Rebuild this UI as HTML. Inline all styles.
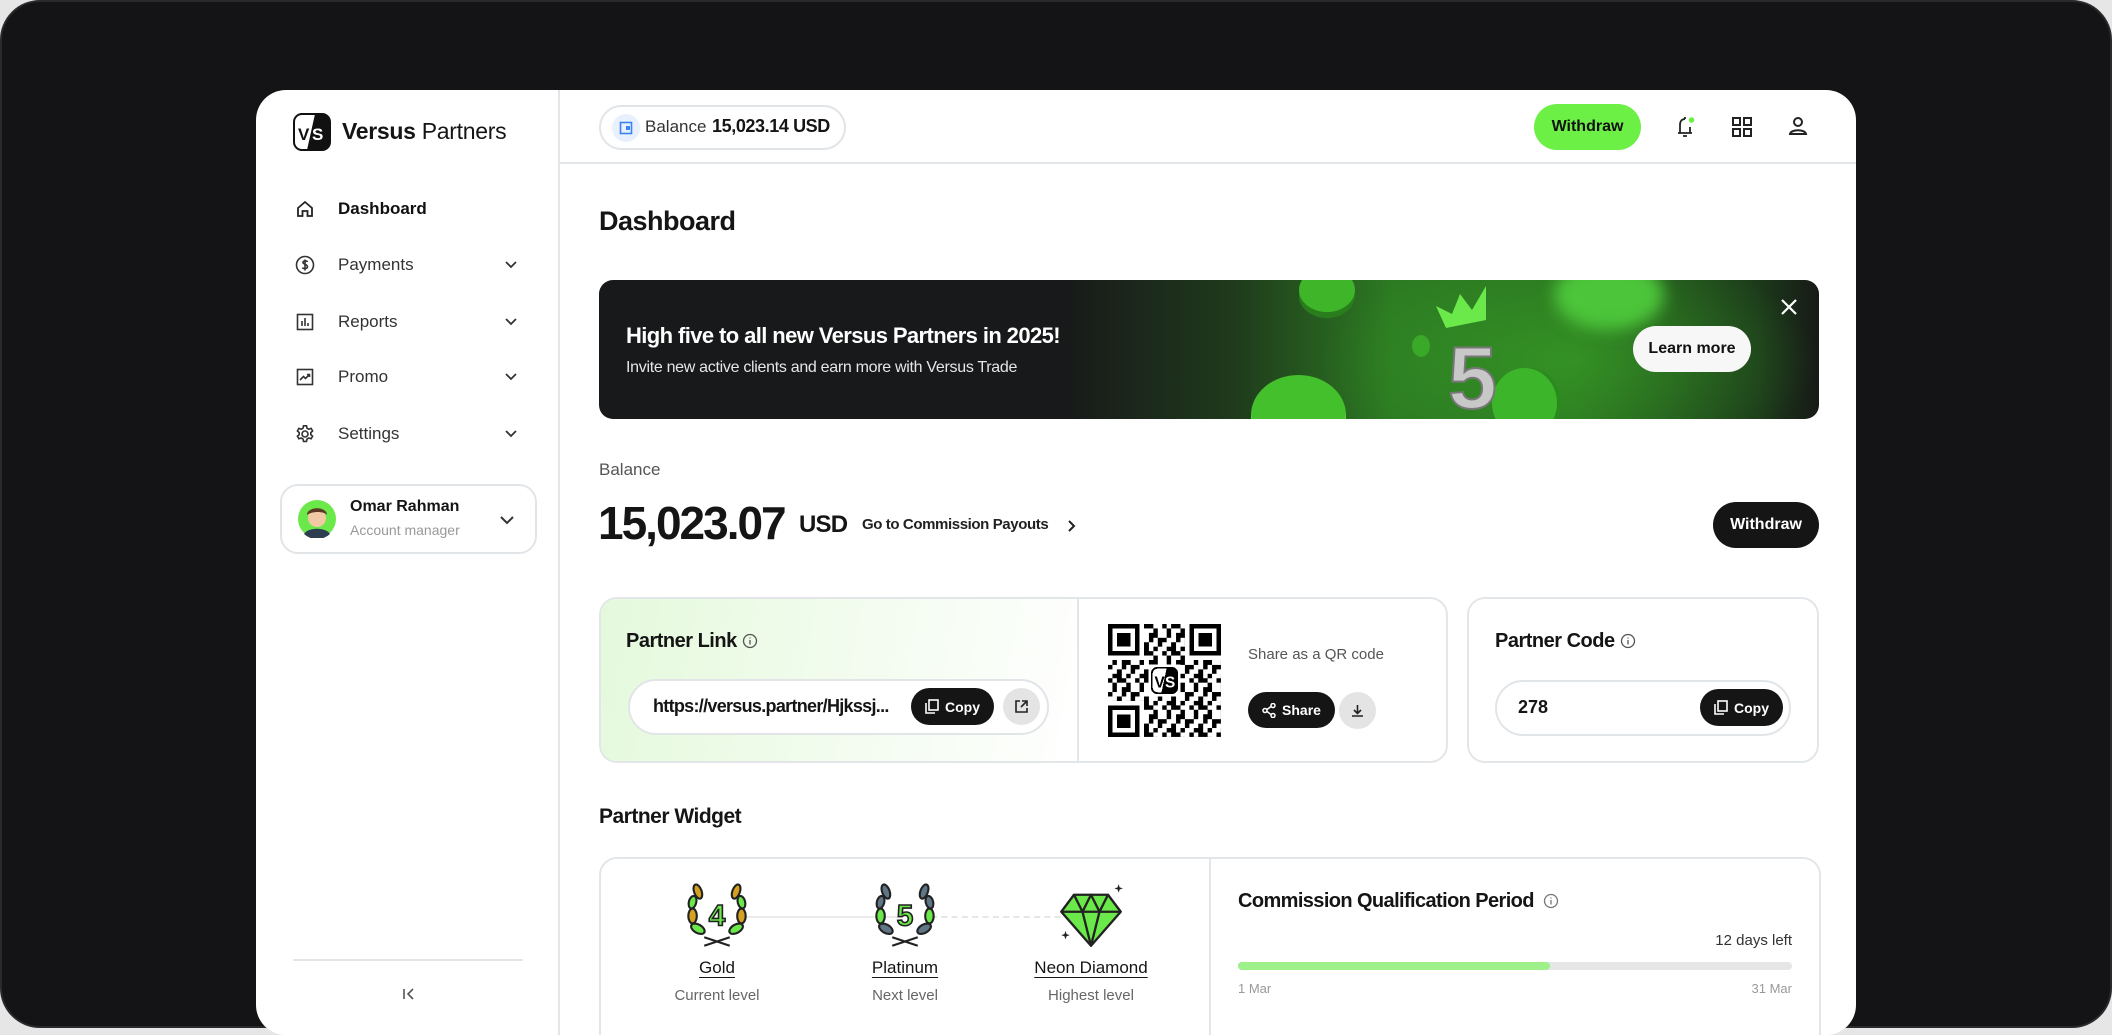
<!DOCTYPE html>
<html><head><meta charset="utf-8">
<style>
*{box-sizing:border-box;margin:0;padding:0}
body{width:2112px;height:1028px;overflow:hidden;background:#e6e6e6;font-family:"Liberation Sans",sans-serif;color:#151515;position:relative}
.bg{position:absolute;left:0;top:0;width:2112px;height:1028px;background:#141416;border-radius:40px;border:2px solid #2a2a2c}
.card{position:absolute;left:256px;top:90px;width:1600px;height:945px;background:#fff;border-radius:30px;overflow:hidden}
.abs{position:absolute}
.side{position:absolute;left:0;top:0;width:304px;height:945px;border-right:2px solid #e3e6e8}
.nav{position:absolute;left:55px;font-size:17px;color:#333}
.nav svg{position:absolute;left:-16px;top:-10px}
.nav span{position:absolute;left:27px;white-space:nowrap;top:-10px}
.chev{position:absolute;left:248px}
.top{position:absolute;left:304px;top:0;right:0;height:74px;border-bottom:2px solid #e3e6e8}
.pill{border:2px solid #e2e5e8;border-radius:30px}
.btn{position:absolute;display:flex;align-items:center;justify-content:center;border-radius:30px;font-weight:bold}
.dark{background:#151515;color:#fff}
.t{position:absolute;white-space:nowrap}
.box{position:absolute;border:2px solid #e3e6e8;border-radius:18px;overflow:hidden}
.lbl{position:absolute;width:180px;text-align:center;font-size:17px;text-decoration:underline;text-underline-offset:4px}
.sub{position:absolute;width:180px;text-align:center;font-size:15px;color:#666}
</style></head><body>
<div class="bg"></div>
<div class="card">
 <div class="side">
  <svg class="abs" style="left:37px;top:23px" width="38" height="38" viewBox="0 0 38 38"><rect x="1" y="1" width="36" height="36" rx="8" fill="#fff" stroke="#111" stroke-width="2"/><path d="M22 1 H29 A8 8 0 0 1 37 9 V29 A8 8 0 0 1 29 37 H14 Z" fill="#111"/><text x="5" y="27" font-family="Liberation Sans" font-weight="bold" font-size="17" fill="#111">V</text><text x="19" y="27" font-family="Liberation Sans" font-weight="bold" font-size="17" fill="#fff">S</text></svg>
  <div class="t" style="left:86px;top:28px;font-size:23px;letter-spacing:-0.3px"><b>Versus</b> Partners</div>
  <div class="nav" style="top:119px"><svg width="20" height="20" viewBox="0 0 20 20" fill="none" stroke="#222" stroke-width="1.8"><path d="M3 9 L10 3 L17 9 V17 H12.5 V12 H7.5 V17 H3 Z"/></svg><span style="font-weight:bold;color:#111">Dashboard</span></div>
  <div class="nav" style="top:175px"><svg width="20" height="20" viewBox="0 0 20 20" fill="none" stroke="#333" stroke-width="1.6"><circle cx="10" cy="10" r="8.5"/><path d="M12.5 7 C12 5.5 8 5.5 8 7.5 C8 9.5 12.5 9 12.5 11.8 C12.5 14 8 14 7.5 12.5 M10 4.5 V15.5"/></svg><span>Payments</span></div>
  <div class="nav" style="top:232px"><svg width="20" height="20" viewBox="0 0 20 20" fill="none" stroke="#333" stroke-width="1.6"><rect x="2.5" y="2.5" width="15" height="15"/><path d="M7 14V9 M10 14V6 M13 14V11"/></svg><span>Reports</span></div>
  <div class="nav" style="top:287px"><svg width="20" height="20" viewBox="0 0 20 20" fill="none" stroke="#333" stroke-width="1.6"><rect x="2.5" y="2.5" width="15" height="15"/><path d="M5 13 L8.5 9.5 L10.5 11.5 L14.5 7.5 M12 7.5H14.5V10"/></svg><span>Promo</span></div>
  <div class="nav" style="top:344px"><svg width="20" height="20" viewBox="0 0 20 20" fill="none" stroke="#333" stroke-width="1.6"><circle cx="10" cy="10" r="3"/><path d="M8.5 1.8h3l.5 2.4 1.8 1 2.3-.8 1.5 2.6-1.8 1.6v2l1.8 1.6-1.5 2.6-2.3-.8-1.8 1-.5 2.4h-3l-.5-2.4-1.8-1-2.3.8-1.5-2.6 1.8-1.6v-2L2.4 7l1.5-2.6 2.3.8 1.8-1z"/></svg><span>Settings</span></div>
  <svg class="chev" style="top:170px" width="14" height="10" viewBox="0 0 14 10" fill="none" stroke="#333" stroke-width="1.8"><path d="M2 2l5 5 5-5"/></svg>
  <svg class="chev" style="top:227px" width="14" height="10" viewBox="0 0 14 10" fill="none" stroke="#333" stroke-width="1.8"><path d="M2 2l5 5 5-5"/></svg>
  <svg class="chev" style="top:282px" width="14" height="10" viewBox="0 0 14 10" fill="none" stroke="#333" stroke-width="1.8"><path d="M2 2l5 5 5-5"/></svg>
  <svg class="chev" style="top:339px" width="14" height="10" viewBox="0 0 14 10" fill="none" stroke="#333" stroke-width="1.8"><path d="M2 2l5 5 5-5"/></svg>
  <div class="abs pill" style="left:24px;top:394px;width:257px;height:70px;border-radius:18px"></div>
  <svg class="abs" style="left:42px;top:410px" width="38" height="38" viewBox="0 0 38 38"><circle cx="19" cy="19" r="19" fill="#6be84a"/><circle cx="19" cy="18" r="9" fill="#f1c9a5"/><path d="M9 15 C9 6 29 6 29 15 C26 11 14 11 9 15Z" fill="#5a3a22"/><path d="M6 34 C10 27 28 27 32 34 A19 19 0 0 1 6 34Z" fill="#2c3e50"/></svg>
  <div class="t" style="left:94px;top:408px;font-size:16px;font-weight:bold">Omar Rahman</div>
  <div class="t" style="left:94px;top:432px;font-size:14px;color:#999">Account manager</div>
  <svg class="abs" style="left:243px;top:425px" width="16" height="10" viewBox="0 0 16 10" fill="none" stroke="#333" stroke-width="2"><path d="M2 2l6 6 6-6"/></svg>
  <div class="abs" style="left:37px;top:869px;width:230px;height:2px;background:#e3e6e8"></div>
  <svg class="abs" style="left:146px;top:897px" width="14" height="14" viewBox="0 0 14 14" fill="none" stroke="#555" stroke-width="1.6"><path d="M2 2V12 M11 2L6 7L11 12"/></svg>
 </div>
 <div class="top">
  <div class="abs pill" style="left:39px;top:15px;width:247px;height:45px"></div>
  <div class="abs" style="left:52px;top:24px;width:28px;height:28px;border-radius:50%;background:#e8f0fd"></div>
  <svg class="abs" style="left:59px;top:31px" width="14" height="14" viewBox="0 0 14 14"><rect x="1.5" y="1.5" width="11" height="11" fill="none" stroke="#3b82f6" stroke-width="1.6"/><rect x="7" y="5" width="4" height="4" fill="#3b82f6"/></svg>
  <div class="t" style="left:85px;top:27px;font-size:17px;color:#333">Balance</div>
  <div class="t" style="left:152px;top:26px;font-size:18px;font-weight:bold;letter-spacing:-0.4px">15,023.14 USD</div>
  <div class="btn" style="left:974px;top:14px;width:107px;height:46px;background:#6cf046;color:#111;font-size:16px">Withdraw</div>
  <svg class="abs" style="left:1112px;top:24px" width="26" height="26" viewBox="0 0 26 26" fill="none" stroke="#222" stroke-width="1.8"><path d="M6 19 H20 M8 19 V11 C8 7 10 5 13 5 M18 13 V19 M11 22 H15 M13 3V5"/><circle cx="19.5" cy="6" r="2.8" fill="#6cf046" stroke="none"/></svg>
  <svg class="abs" style="left:1171px;top:26px" width="22" height="22" viewBox="0 0 22 22" fill="none" stroke="#222" stroke-width="2"><rect x="2" y="2" width="7" height="7"/><rect x="13" y="2" width="7" height="7"/><rect x="2" y="13" width="7" height="7"/><rect x="13" y="13" width="7" height="7"/></svg>
  <svg class="abs" style="left:1227px;top:25px" width="22" height="22" viewBox="0 0 22 22" fill="none" stroke="#222" stroke-width="2"><circle cx="11" cy="7" r="4"/><path d="M3 19 C4 14 18 14 19 19 Z"/></svg>
 </div>
 <div class="t" style="left:343px;top:116px;font-size:27px;font-weight:bold;letter-spacing:-0.5px">Dashboard</div>
 <!-- banner -->
 <div class="abs" style="left:343px;top:190px;width:1220px;height:139px;border-radius:14px;overflow:hidden;background:linear-gradient(90deg,#18191a 0%,#18191a 38%,#1f3a1c 52%,#2c7a22 65%,#2a7320 80%,#1c3a1a 95%,#171a17 100%)">
  <div class="abs" style="left:720px;top:-40px;width:500px;height:240px;background:radial-gradient(ellipse at center,rgba(60,170,40,.55),rgba(0,0,0,0) 70%)"></div>
  <div class="abs" style="left:700px;top:-12px;width:56px;height:44px;border-radius:50%;background:#3fb52a;box-shadow:0 6px 0 #2a7d1c"></div>
  <div class="abs" style="left:652px;top:95px;width:95px;height:80px;border-radius:50%;background:#44c02c;box-shadow:0 -4px 0 #6de24e inset"></div>
  <div class="abs" style="left:813px;top:55px;width:18px;height:22px;border-radius:50%;background:#3aa828"></div>
  <div class="abs" style="left:893px;top:88px;width:65px;height:70px;border-radius:50%;background:#3db52a;box-shadow:4px 0 0 #2a8a1d"></div>
  <div class="abs" style="left:955px;top:-20px;width:110px;height:70px;border-radius:50%;background:#4cc53a;filter:blur(8px)"></div>
  <svg class="abs" style="left:835px;top:4px" width="80" height="130" viewBox="0 0 80 130"><path d="M2 22 L18 30 L26 10 L38 26 L52 2 L52 36 L12 44Z" fill="#6be84a"/><text x="14" y="124" font-family="Liberation Sans" font-weight="bold" font-size="88" fill="#c8c8c8" stroke="#777" stroke-width="2">5</text></svg>
  <div class="t" style="left:27px;top:43px;font-size:22px;font-weight:bold;color:#fff;letter-spacing:-0.6px">High five to all new Versus Partners in 2025!</div>
  <div class="t" style="left:27px;top:79px;font-size:16px;color:#e6e6e6;letter-spacing:-0.3px">Invite new active clients and earn more with Versus Trade</div>
  <div class="btn" style="left:1034px;top:46px;width:118px;height:46px;background:#f7f7f8;color:#111;font-size:16px">Learn more</div>
  <svg class="abs" style="left:1181px;top:18px" width="18" height="18" viewBox="0 0 18 18" stroke="#fff" stroke-width="2.2"><path d="M2 2L16 16M16 2L2 16"/></svg>
 </div>
 <div class="t" style="left:343px;top:370px;font-size:17px;color:#555">Balance</div>
 <div class="t" style="left:342px;top:406px;font-size:46px;font-weight:bold;letter-spacing:-2px">15,023.07</div>
 <div class="t" style="left:543px;top:421px;font-size:24px;font-weight:bold;letter-spacing:-0.8px">USD</div>
 <div class="t" style="left:606px;top:426px;font-size:15px;font-weight:bold;color:#222;letter-spacing:-0.4px">Go to Commission Payouts</div>
 <svg class="abs" style="left:810px;top:429px" width="10" height="14" viewBox="0 0 10 14" fill="none" stroke="#222" stroke-width="2"><path d="M3 2l5 5-5 5"/></svg>
 <div class="btn dark" style="left:1457px;top:412px;width:106px;height:46px;font-size:16px">Withdraw</div>

 <!-- partner link card -->
 <div class="box" style="left:343px;top:507px;width:849px;height:166px">
  <div class="abs" style="left:0;top:0;width:478px;height:166px;background:linear-gradient(100deg,#e4f9dc 0%,#f2fcee 50%,#fff 100%);border-right:2px solid #e3e6e8"></div>
  <div class="t" style="left:25px;top:31px;font-size:20px;font-weight:bold;letter-spacing:-0.5px">Partner Link</div>
  <svg class="abs" style="left:141px;top:34px" width="16" height="16" viewBox="0 0 16 16" fill="none" stroke="#555" stroke-width="1.3"><circle cx="8" cy="8" r="6.5"/><path d="M8 7V11.5M8 4.5V5.5"/></svg>
  <div class="abs pill" style="left:27px;top:80px;width:421px;height:56px;background:#fff"></div>
  <div class="t" style="left:52px;top:97px;font-size:18px;font-weight:bold;letter-spacing:-0.7px">https://versus.partner/Hjkssj...</div>
  <div class="btn dark" style="left:310px;top:89px;width:83px;height:37px;font-size:14px"><svg width="14" height="15" viewBox="0 0 14 15" fill="none" stroke="#fff" stroke-width="1.6" style="margin-right:6px"><rect x="4" y="1" width="9" height="10"/><path d="M1 4V14H10"/></svg>Copy</div>
  <div class="abs" style="left:402px;top:89px;width:37px;height:37px;border-radius:50%;background:#e4e4e4"></div>
  <svg class="abs" style="left:413px;top:100px" width="15" height="15" viewBox="0 0 15 15" fill="none" stroke="#222" stroke-width="1.6"><path d="M6 2H2V13H13V9M8 2H13V7M13 2L7 8"/></svg>
  <svg class="abs" style="left:507px;top:25px" width="113" height="113" viewBox="0 0 25 25" shape-rendering="crispEdges">
   <defs><pattern id="q" width="6" height="6" patternUnits="userSpaceOnUse"><rect x="0" y="0" width="1" height="1"/><rect x="2" y="0" width="2" height="1"/><rect x="1" y="1" width="1" height="2"/><rect x="4" y="1" width="1" height="1"/><rect x="3" y="2" width="2" height="1"/><rect x="0" y="3" width="1" height="1"/><rect x="5" y="3" width="1" height="2"/><rect x="2" y="4" width="1" height="1"/><rect x="1" y="5" width="2" height="1"/><rect x="4" y="5" width="1" height="1"/><rect x="3" y="3" width="1" height="1"/></pattern></defs>
   <rect x="0" y="0" width="25" height="25" fill="url(#q)"/>
   <rect x="0" y="0" width="8" height="8" fill="#fff"/><rect x="17" y="0" width="8" height="8" fill="#fff"/><rect x="0" y="17" width="8" height="8" fill="#fff"/>
   <rect x="0.5" y="0.5" width="6" height="6" fill="none" stroke="#000"/><rect x="2" y="2" width="3" height="3"/>
   <rect x="18.5" y="0.5" width="6" height="6" fill="none" stroke="#000"/><rect x="20" y="2" width="3" height="3"/>
   <rect x="0.5" y="18.5" width="6" height="6" fill="none" stroke="#000"/><rect x="2" y="20" width="3" height="3"/>
   <rect x="9" y="9" width="7" height="7" fill="#fff"/>
   <rect x="9.7" y="9.7" width="5.6" height="5.6" rx="1.2" fill="#fff" stroke="#000" stroke-width="0.4"/>
   <path d="M13 9.7H14.1A1.2 1.2 0 0 1 15.3 10.9V14.1A1.2 1.2 0 0 1 14.1 15.3H11.8Z"/>
   <text x="10.3" y="14" font-family="Liberation Sans" font-weight="bold" font-size="3.4" fill="#000">V</text><text x="12.6" y="14" font-family="Liberation Sans" font-weight="bold" font-size="3.4" fill="#fff">S</text>
  </svg>
  <div class="t" style="left:647px;top:47px;font-size:15px;color:#555">Share as a QR code</div>
  <div class="btn dark" style="left:647px;top:93px;width:87px;height:36px;font-size:14px"><svg width="14" height="15" viewBox="0 0 14 15" fill="none" stroke="#fff" stroke-width="1.5" style="margin-right:6px"><circle cx="3" cy="7.5" r="2"/><circle cx="11" cy="2.5" r="2"/><circle cx="11" cy="12.5" r="2"/><path d="M5 6.5L9 3.5M5 8.5L9 11.5"/></svg>Share</div>
  <div class="abs" style="left:738px;top:93px;width:37px;height:37px;border-radius:50%;background:#e4e4e4"></div>
  <svg class="abs" style="left:749px;top:104px" width="15" height="15" viewBox="0 0 15 15" fill="none" stroke="#222" stroke-width="1.6"><path d="M7.5 2V10M4 7L7.5 10.5L11 7M2 13H13"/></svg>
 </div>
 <!-- partner code -->
 <div class="box" style="left:1211px;top:507px;width:352px;height:166px">
  <div class="t" style="left:26px;top:31px;font-size:20px;font-weight:bold;letter-spacing:-0.5px">Partner Code</div>
  <svg class="abs" style="left:151px;top:34px" width="16" height="16" viewBox="0 0 16 16" fill="none" stroke="#555" stroke-width="1.3"><circle cx="8" cy="8" r="6.5"/><path d="M8 7V11.5M8 4.5V5.5"/></svg>
  <div class="abs pill" style="left:26px;top:81px;width:296px;height:56px"></div>
  <div class="t" style="left:49px;top:98px;font-size:18px;font-weight:bold">278</div>
  <div class="btn dark" style="left:231px;top:90px;width:83px;height:37px;font-size:14px"><svg width="14" height="15" viewBox="0 0 14 15" fill="none" stroke="#fff" stroke-width="1.6" style="margin-right:6px"><rect x="4" y="1" width="9" height="10"/><path d="M1 4V14H10"/></svg>Copy</div>
 </div>
 <div class="t" style="left:343px;top:715px;font-size:21px;font-weight:bold;letter-spacing:-0.5px">Partner Widget</div>
 <!-- widget -->
 <div class="box" style="left:343px;top:767px;width:1222px;height:200px">
  <div class="abs" style="left:608px;top:0;width:2px;height:200px;background:#e3e6e8"></div>
  <div class="abs" style="left:140px;top:57px;width:160px;height:2px;background:#ececec"></div>
  <div class="abs" style="left:330px;top:57px;width:140px;height:0;border-top:2px dashed #e6e6e6"></div>
  <svg class="abs" style="left:82px;top:23px" width="68" height="68" viewBox="0 0 64 64" stroke="#222" stroke-width="2">
   <g fill="#6be84a"><ellipse cx="14" cy="44" rx="7" ry="4" transform="rotate(30 14 44)"/><ellipse cx="50" cy="44" rx="7" ry="4" transform="rotate(-30 50 44)"/></g>
   <g fill="#d4a21f"><ellipse cx="9" cy="32" rx="4" ry="7"/><ellipse cx="55" cy="32" rx="4" ry="7"/><ellipse cx="14" cy="9" rx="3.5" ry="7" transform="rotate(-20 14 9)"/><ellipse cx="50" cy="9" rx="3.5" ry="7" transform="rotate(20 50 9)"/></g>
   <g fill="#6be84a"><ellipse cx="9" cy="19" rx="3.5" ry="6" transform="rotate(15 9 19)"/><ellipse cx="55" cy="19" rx="3.5" ry="6" transform="rotate(-15 55 19)"/></g>
   <path d="M20 60 L44 52 M44 60 L20 52" fill="none"/>
   <text x="32" y="41" text-anchor="middle" font-family="Liberation Sans" font-weight="bold" font-size="28" fill="#6be84a" stroke="#222" stroke-width="1.5">4</text>
  </svg>
  <svg class="abs" style="left:270px;top:23px" width="68" height="68" viewBox="0 0 64 64" stroke="#222" stroke-width="2">
   <g fill="#5e7686"><ellipse cx="14" cy="44" rx="7" ry="4" transform="rotate(30 14 44)"/><ellipse cx="50" cy="44" rx="7" ry="4" transform="rotate(-30 50 44)"/><ellipse cx="14" cy="9" rx="3.5" ry="7" transform="rotate(-20 14 9)"/><ellipse cx="50" cy="9" rx="3.5" ry="7" transform="rotate(20 50 9)"/></g>
   <g fill="#6be84a"><ellipse cx="9" cy="32" rx="4" ry="7"/><ellipse cx="55" cy="32" rx="4" ry="7"/></g>
   <g fill="#5e7686"><ellipse cx="9" cy="19" rx="3.5" ry="6" transform="rotate(15 9 19)"/><ellipse cx="55" cy="19" rx="3.5" ry="6" transform="rotate(-15 55 19)"/></g>
   <path d="M20 60 L44 52 M44 60 L20 52" fill="none"/>
   <text x="32" y="41" text-anchor="middle" font-family="Liberation Sans" font-weight="bold" font-size="28" fill="#6be84a" stroke="#222" stroke-width="1.5">5</text>
  </svg>
  <svg class="abs" style="left:456px;top:23px" width="68" height="68" viewBox="0 0 64 64" stroke="#222" stroke-width="2.2" stroke-linejoin="round">
   <path d="M4 28 L16 12 H48 L60 28 L32 60 Z" fill="#6be84a"/>
   <path d="M4 28 H60 M16 12 L24 28 L32 60 L40 28 L48 12 M24 28 L32 12 L40 28" fill="none"/>
   <path d="M58 2 L59 5 L62 6 L59 7 L58 10 L57 7 L54 6 L57 5Z M8 46 L9 49 L12 50 L9 51 L8 54 L7 51 L4 50 L7 49Z" fill="#222" stroke="none"/>
  </svg>
  <div class="lbl" style="left:26px;top:99px">Gold</div>
  <div class="sub" style="left:26px;top:128px">Current level</div>
  <div class="lbl" style="left:214px;top:99px">Platinum</div>
  <div class="sub" style="left:214px;top:128px">Next level</div>
  <div class="lbl" style="left:400px;top:99px">Neon Diamond</div>
  <div class="sub" style="left:400px;top:128px">Highest level</div>
  <div class="t" style="left:637px;top:31px;font-size:20px;font-weight:bold;letter-spacing:-0.6px">Commission Qualification Period</div>
  <svg class="abs" style="left:942px;top:34px" width="16" height="16" viewBox="0 0 16 16" fill="none" stroke="#777" stroke-width="1.3"><circle cx="8" cy="8" r="6.5"/><path d="M8 7V11.5M8 4.5V5.5"/></svg>
  <div class="t" style="right:27px;top:73px;font-size:15px;color:#333">12 days left</div>
  <div class="abs" style="left:637px;top:103px;width:554px;height:8px;border-radius:4px;background:#e6e6e6"></div>
  <div class="abs" style="left:637px;top:103px;width:312px;height:8px;border-radius:4px;background:#9df08a"></div>
  <div class="t" style="left:637px;top:122px;font-size:13px;color:#999">1 Mar</div>
  <div class="t" style="right:27px;top:122px;font-size:13px;color:#999">31 Mar</div>
 </div>
</div>
</body></html>
